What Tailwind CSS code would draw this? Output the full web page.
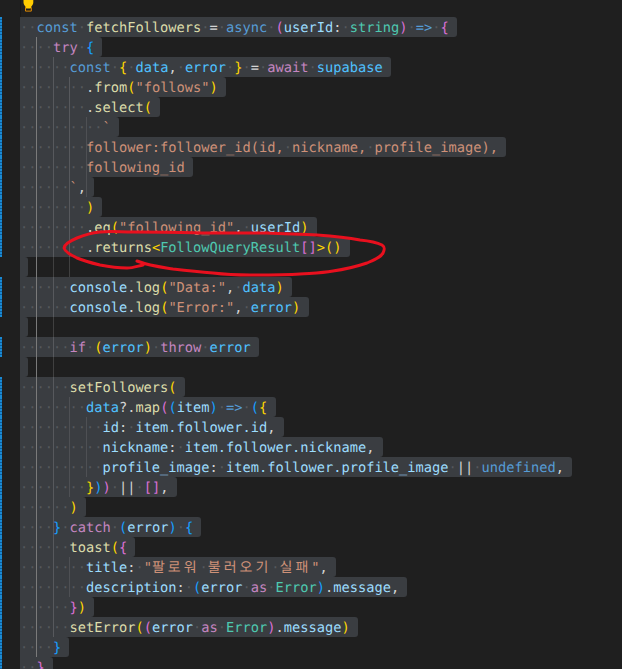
<!doctype html>
<html lang="ko">
<head>
<meta charset="utf-8">
<script src="https://cdn.jsdelivr.net/npm/@tailwindcss/browser@4"></script>
<title>fetchFollowers</title>
</head>
<body class="bg-[#1f1f1f]">
<main class="relative w-[622px] h-[669px] overflow-hidden bg-[#1f1f1f] font-['DejaVu_Sans_Mono','Noto_Sans_CJK_KR',monospace] text-[13.7px] leading-[22px] text-[#d4d4d4] whitespace-nowrap [text-rendering:geometricPrecision]">
  <div class="h-[17px] flex"><div class="w-[21px] border-r border-[#181818]"></div></div>

  <div class="flex flex-col">
    <!-- 0 --><div class="flex h-5"><div class="w-5 shrink-0 relative"><div class="w-0.5 h-5 bg-[repeating-linear-gradient(180deg,#1a8ad4_0,#1a8ad4_2px,#0d5f9c_2px,#0d5f9c_3px)]"></div></div><div class="bg-[#3a3d41] rounded-r-[3px] pr-[8.25px]"><span class="text-[#55585c]">··</span><span class="text-[#569cd6]">const</span><span class="text-[#55585c]">·</span><span class="text-[#dcdcaa]">fetchFollowers</span><span class="text-[#55585c]">·</span>=<span class="text-[#55585c]">·</span><span class="text-[#569cd6]">async</span><span class="text-[#55585c]">·</span><span class="text-[#da70d6]">(</span><span class="text-[#9cdcfe]">userId</span>:<span class="text-[#55585c]">·</span><span class="text-[#4ec9b0]">string</span><span class="text-[#da70d6]">)</span><span class="text-[#55585c]">·</span><span class="text-[#569cd6]">=&gt;</span><span class="text-[#55585c]">·</span><span class="text-[#da70d6]">{</span></div></div>
    <!-- 1 --><div class="flex h-5"><div class="w-5 shrink-0 relative"><div class="w-0.5 h-5 bg-[repeating-linear-gradient(180deg,#1a8ad4_0,#1a8ad4_2px,#0d5f9c_2px,#0d5f9c_3px)]"></div></div><div class="bg-[#3a3d41] rounded-r-[3px] pr-[8.25px]"><span class="text-[#55585c]">····</span><span class="text-[#c586c0]">try</span><span class="text-[#55585c]">·</span><span class="text-[#179fff]">{</span></div></div>
    <!-- 2 --><div class="flex h-5"><div class="w-5 shrink-0 relative"><div class="w-0.5 h-5 bg-[repeating-linear-gradient(180deg,#1a8ad4_0,#1a8ad4_2px,#0d5f9c_2px,#0d5f9c_3px)]"></div></div><div class="bg-[#3a3d41] rounded-r-[3px] pr-[8.25px]"><span class="text-[#55585c]">······</span><span class="text-[#569cd6]">const</span><span class="text-[#55585c]">·</span><span class="text-[#ffd700]">{</span><span class="text-[#55585c]">·</span><span class="text-[#4fc1ff]">data</span>,<span class="text-[#55585c]">·</span><span class="text-[#4fc1ff]">error</span><span class="text-[#55585c]">·</span><span class="text-[#ffd700]">}</span><span class="text-[#55585c]">·</span>=<span class="text-[#55585c]">·</span><span class="text-[#c586c0]">await</span><span class="text-[#55585c]">·</span><span class="text-[#4fc1ff]">supabase</span></div></div>
    <!-- 3 --><div class="flex h-5"><div class="w-5 shrink-0 relative"><div class="w-0.5 h-5 bg-[repeating-linear-gradient(180deg,#1a8ad4_0,#1a8ad4_2px,#0d5f9c_2px,#0d5f9c_3px)]"></div></div><div class="bg-[#3a3d41] rounded-r-[3px] pr-[8.25px]"><span class="text-[#55585c]">········</span>.<span class="text-[#dcdcaa]">from</span><span class="text-[#ffd700]">(</span><span class="text-[#ce9178]">"follows"</span><span class="text-[#ffd700]">)</span></div></div>
    <!-- 4 --><div class="flex h-5"><div class="w-5 shrink-0 relative"><div class="w-0.5 h-5 bg-[repeating-linear-gradient(180deg,#1a8ad4_0,#1a8ad4_2px,#0d5f9c_2px,#0d5f9c_3px)]"></div></div><div class="bg-[#3a3d41] rounded-r-[3px] pr-[8.25px]"><span class="text-[#55585c]">········</span>.<span class="text-[#dcdcaa]">select</span><span class="text-[#ffd700]">(</span></div></div>
    <!-- 5 --><div class="flex h-5"><div class="w-5 shrink-0 relative"><div class="w-0.5 h-5 bg-[repeating-linear-gradient(180deg,#1a8ad4_0,#1a8ad4_2px,#0d5f9c_2px,#0d5f9c_3px)]"></div></div><div class="bg-[#3a3d41] rounded-r-[3px] pr-[8.25px]"><span class="text-[#55585c]">··········</span><span class="text-[#ce9178]">`</span></div></div>
    <!-- 6 --><div class="flex h-5"><div class="w-5 shrink-0 relative"><div class="w-0.5 h-5 bg-[repeating-linear-gradient(180deg,#1a8ad4_0,#1a8ad4_2px,#0d5f9c_2px,#0d5f9c_3px)]"></div></div><div class="bg-[#3a3d41] rounded-r-[3px] pr-[8.25px]"><span class="text-[#55585c]">········</span><span class="text-[#ce9178]">follower:follower_id(id,<span class="text-[#55585c]">·</span>nickname,<span class="text-[#55585c]">·</span>profile_image),</span></div></div>
    <!-- 7 --><div class="flex h-5"><div class="w-5 shrink-0 relative"><div class="w-0.5 h-5 bg-[repeating-linear-gradient(180deg,#1a8ad4_0,#1a8ad4_2px,#0d5f9c_2px,#0d5f9c_3px)]"></div></div><div class="bg-[#3a3d41] rounded-r-[3px] pr-[8.25px]"><span class="text-[#55585c]">········</span><span class="text-[#ce9178]">following_id</span></div></div>
    <!-- 8 --><div class="flex h-5"><div class="w-5 shrink-0 relative"><div class="w-0.5 h-5 bg-[repeating-linear-gradient(180deg,#1a8ad4_0,#1a8ad4_2px,#0d5f9c_2px,#0d5f9c_3px)]"></div></div><div class="bg-[#3a3d41] rounded-r-[3px] pr-[8.25px]"><span class="text-[#55585c]">······</span><span class="text-[#ce9178]">`</span>,</div></div>
    <!-- 9 --><div class="flex h-5"><div class="w-5 shrink-0 relative"><div class="w-0.5 h-5 bg-[repeating-linear-gradient(180deg,#1a8ad4_0,#1a8ad4_2px,#0d5f9c_2px,#0d5f9c_3px)]"></div></div><div class="bg-[#3a3d41] rounded-r-[3px] pr-[8.25px]"><span class="text-[#55585c]">········</span><span class="text-[#ffd700]">)</span></div></div>
    <!-- 10 --><div class="flex h-5"><div class="w-5 shrink-0 relative"><div class="w-0.5 h-5 bg-[repeating-linear-gradient(180deg,#1a8ad4_0,#1a8ad4_2px,#0d5f9c_2px,#0d5f9c_3px)]"></div></div><div class="bg-[#3a3d41] rounded-r-[3px] pr-[8.25px]"><span class="text-[#55585c]">········</span>.<span class="text-[#dcdcaa]">eq</span><span class="text-[#ffd700]">(</span><span class="text-[#ce9178]">"following_id"</span>,<span class="text-[#55585c]">·</span><span class="text-[#9cdcfe]">userId</span><span class="text-[#ffd700]">)</span></div></div>
    <!-- 11 --><div class="flex h-5"><div class="w-5 shrink-0 relative"><div class="w-0.5 h-5 bg-[repeating-linear-gradient(180deg,#1a8ad4_0,#1a8ad4_2px,#0d5f9c_2px,#0d5f9c_3px)]"></div></div><div class="bg-[#3a3d41] rounded-r-[3px] pr-[8.25px]"><span class="text-[#55585c]">········</span>.<span class="text-[#dcdcaa]">returns</span><span class="text-[#ffd700]">&lt;</span><span class="text-[#4ec9b0]">FollowQueryResult</span><span class="text-[#da70d6]">[]</span><span class="text-[#ffd700]">&gt;()</span></div></div>
    <!-- 12 --><div class="flex h-5"><div class="w-5 shrink-0"></div><div class="bg-[#3a3d41] rounded-r-[3px] w-[8.25px]"></div></div>
    <!-- 13 --><div class="flex h-5"><div class="w-5 shrink-0 relative"><div class="w-0.5 h-5 bg-[repeating-linear-gradient(180deg,#1a8ad4_0,#1a8ad4_2px,#0d5f9c_2px,#0d5f9c_3px)]"></div></div><div class="bg-[#3a3d41] rounded-r-[3px] pr-[8.25px]"><span class="text-[#55585c]">······</span><span class="text-[#9cdcfe]">console</span>.<span class="text-[#dcdcaa]">log</span><span class="text-[#ffd700]">(</span><span class="text-[#ce9178]">"Data:"</span>,<span class="text-[#55585c]">·</span><span class="text-[#4fc1ff]">data</span><span class="text-[#ffd700]">)</span></div></div>
    <!-- 14 --><div class="flex h-5"><div class="w-5 shrink-0 relative"><div class="w-0.5 h-5 bg-[repeating-linear-gradient(180deg,#1a8ad4_0,#1a8ad4_2px,#0d5f9c_2px,#0d5f9c_3px)]"></div></div><div class="bg-[#3a3d41] rounded-r-[3px] pr-[8.25px]"><span class="text-[#55585c]">······</span><span class="text-[#9cdcfe]">console</span>.<span class="text-[#dcdcaa]">log</span><span class="text-[#ffd700]">(</span><span class="text-[#ce9178]">"Error:"</span>,<span class="text-[#55585c]">·</span><span class="text-[#4fc1ff]">error</span><span class="text-[#ffd700]">)</span></div></div>
    <!-- 15 --><div class="flex h-5"><div class="w-5 shrink-0"></div><div class="bg-[#3a3d41] rounded-r-[3px] w-[8.25px]"></div></div>
    <!-- 16 --><div class="flex h-5"><div class="w-5 shrink-0 relative"><div class="w-0.5 h-5 bg-[repeating-linear-gradient(180deg,#1a8ad4_0,#1a8ad4_2px,#0d5f9c_2px,#0d5f9c_3px)]"></div></div><div class="bg-[#3a3d41] rounded-r-[3px] pr-[8.25px]"><span class="text-[#55585c]">······</span><span class="text-[#c586c0]">if</span><span class="text-[#55585c]">·</span><span class="text-[#ffd700]">(</span><span class="text-[#4fc1ff]">error</span><span class="text-[#ffd700]">)</span><span class="text-[#55585c]">·</span><span class="text-[#c586c0]">throw</span><span class="text-[#55585c]">·</span><span class="text-[#4fc1ff]">error</span></div></div>
    <!-- 17 --><div class="flex h-5"><div class="w-5 shrink-0"></div><div class="bg-[#3a3d41] rounded-r-[3px] w-[8.25px]"></div></div>
    <!-- 18 --><div class="flex h-5"><div class="w-5 shrink-0 relative"><div class="w-0.5 h-5 bg-[repeating-linear-gradient(180deg,#1a8ad4_0,#1a8ad4_2px,#0d5f9c_2px,#0d5f9c_3px)]"></div></div><div class="bg-[#3a3d41] rounded-r-[3px] pr-[8.25px]"><span class="text-[#55585c]">······</span><span class="text-[#dcdcaa]">setFollowers</span><span class="text-[#ffd700]">(</span></div></div>
    <!-- 19 --><div class="flex h-5"><div class="w-5 shrink-0 relative"><div class="w-0.5 h-5 bg-[repeating-linear-gradient(180deg,#1a8ad4_0,#1a8ad4_2px,#0d5f9c_2px,#0d5f9c_3px)]"></div></div><div class="bg-[#3a3d41] rounded-r-[3px] pr-[8.25px]"><span class="text-[#55585c]">········</span><span class="text-[#4fc1ff]">data</span>?.<span class="text-[#dcdcaa]">map</span><span class="text-[#da70d6]">(</span><span class="text-[#179fff]">(</span><span class="text-[#9cdcfe]">item</span><span class="text-[#179fff]">)</span><span class="text-[#55585c]">·</span><span class="text-[#569cd6]">=&gt;</span><span class="text-[#55585c]">·</span><span class="text-[#179fff]">(</span><span class="text-[#ffd700]">{</span></div></div>
    <!-- 20 --><div class="flex h-5"><div class="w-5 shrink-0 relative"><div class="w-0.5 h-5 bg-[repeating-linear-gradient(180deg,#1a8ad4_0,#1a8ad4_2px,#0d5f9c_2px,#0d5f9c_3px)]"></div></div><div class="bg-[#3a3d41] rounded-r-[3px] pr-[8.25px]"><span class="text-[#55585c]">··········</span><span class="text-[#9cdcfe]">id</span>:<span class="text-[#55585c]">·</span><span class="text-[#9cdcfe]">item.follower.id</span>,</div></div>
    <!-- 21 --><div class="flex h-5"><div class="w-5 shrink-0 relative"><div class="w-0.5 h-5 bg-[repeating-linear-gradient(180deg,#1a8ad4_0,#1a8ad4_2px,#0d5f9c_2px,#0d5f9c_3px)]"></div></div><div class="bg-[#3a3d41] rounded-r-[3px] pr-[8.25px]"><span class="text-[#55585c]">··········</span><span class="text-[#9cdcfe]">nickname</span>:<span class="text-[#55585c]">·</span><span class="text-[#9cdcfe]">item.follower.nickname</span>,</div></div>
    <!-- 22 --><div class="flex h-5"><div class="w-5 shrink-0 relative"><div class="w-0.5 h-5 bg-[repeating-linear-gradient(180deg,#1a8ad4_0,#1a8ad4_2px,#0d5f9c_2px,#0d5f9c_3px)]"></div></div><div class="bg-[#3a3d41] rounded-r-[3px] pr-[8.25px]"><span class="text-[#55585c]">··········</span><span class="text-[#9cdcfe]">profile_image</span>:<span class="text-[#55585c]">·</span><span class="text-[#9cdcfe]">item.follower.profile_image</span><span class="text-[#55585c]">·</span>||<span class="text-[#55585c]">·</span><span class="text-[#569cd6]">undefined</span>,</div></div>
    <!-- 23 --><div class="flex h-5"><div class="w-5 shrink-0 relative"><div class="w-0.5 h-5 bg-[repeating-linear-gradient(180deg,#1a8ad4_0,#1a8ad4_2px,#0d5f9c_2px,#0d5f9c_3px)]"></div></div><div class="bg-[#3a3d41] rounded-r-[3px] pr-[8.25px]"><span class="text-[#55585c]">········</span><span class="text-[#ffd700]">}</span><span class="text-[#179fff]">)</span><span class="text-[#da70d6]">)</span><span class="text-[#55585c]">·</span>||<span class="text-[#55585c]">·</span><span class="text-[#da70d6]">[]</span>,</div></div>
    <!-- 24 --><div class="flex h-5"><div class="w-5 shrink-0 relative"><div class="w-0.5 h-5 bg-[repeating-linear-gradient(180deg,#1a8ad4_0,#1a8ad4_2px,#0d5f9c_2px,#0d5f9c_3px)]"></div></div><div class="bg-[#3a3d41] rounded-r-[3px] pr-[8.25px]"><span class="text-[#55585c]">······</span><span class="text-[#ffd700]">)</span></div></div>
    <!-- 25 --><div class="flex h-5"><div class="w-5 shrink-0 relative"><div class="w-0.5 h-5 bg-[repeating-linear-gradient(180deg,#1a8ad4_0,#1a8ad4_2px,#0d5f9c_2px,#0d5f9c_3px)]"></div></div><div class="bg-[#3a3d41] rounded-r-[3px] pr-[8.25px]"><span class="text-[#55585c]">····</span><span class="text-[#179fff]">}</span><span class="text-[#55585c]">·</span><span class="text-[#c586c0]">catch</span><span class="text-[#55585c]">·</span><span class="text-[#179fff]">(</span><span class="text-[#9cdcfe]">error</span><span class="text-[#179fff]">)</span><span class="text-[#55585c]">·</span><span class="text-[#179fff]">{</span></div></div>
    <!-- 26 --><div class="flex h-5"><div class="w-5 shrink-0 relative"><div class="w-0.5 h-5 bg-[repeating-linear-gradient(180deg,#1a8ad4_0,#1a8ad4_2px,#0d5f9c_2px,#0d5f9c_3px)]"></div></div><div class="bg-[#3a3d41] rounded-r-[3px] pr-[8.25px]"><span class="text-[#55585c]">······</span><span class="text-[#dcdcaa]">toast</span><span class="text-[#ffd700]">(</span><span class="text-[#da70d6]">{</span></div></div>
    <!-- 27 --><div class="flex h-5"><div class="w-5 shrink-0 relative"><div class="w-0.5 h-5 bg-[repeating-linear-gradient(180deg,#1a8ad4_0,#1a8ad4_2px,#0d5f9c_2px,#0d5f9c_3px)]"></div></div><div class="bg-[#3a3d41] rounded-r-[3px] pr-[8.25px]"><span class="text-[#55585c]">········</span><span class="text-[#9cdcfe]">title</span>:<span class="text-[#55585c]">·</span><span class="text-[#ce9178]">"<span class="text-[14px] tracking-[3px]">팔로워</span><span class="text-[#55585c]">·</span><span class="text-[14px] tracking-[3px]">불러오기</span><span class="text-[#55585c]">·</span><span class="text-[14px] tracking-[3px]">실패</span>"</span>,</div></div>
    <!-- 28 --><div class="flex h-5"><div class="w-5 shrink-0 relative"><div class="w-0.5 h-5 bg-[repeating-linear-gradient(180deg,#1a8ad4_0,#1a8ad4_2px,#0d5f9c_2px,#0d5f9c_3px)]"></div></div><div class="bg-[#3a3d41] rounded-r-[3px] pr-[8.25px]"><span class="text-[#55585c]">········</span><span class="text-[#9cdcfe]">description</span>:<span class="text-[#55585c]">·</span><span class="text-[#179fff]">(</span><span class="text-[#9cdcfe]">error</span><span class="text-[#55585c]">·</span><span class="text-[#c586c0]">as</span><span class="text-[#55585c]">·</span><span class="text-[#4ec9b0]">Error</span><span class="text-[#179fff]">)</span>.<span class="text-[#9cdcfe]">message</span>,</div></div>
    <!-- 29 --><div class="flex h-5"><div class="w-5 shrink-0 relative"><div class="w-0.5 h-5 bg-[repeating-linear-gradient(180deg,#1a8ad4_0,#1a8ad4_2px,#0d5f9c_2px,#0d5f9c_3px)]"></div></div><div class="bg-[#3a3d41] rounded-r-[3px] pr-[8.25px]"><span class="text-[#55585c]">······</span><span class="text-[#da70d6]">}</span><span class="text-[#ffd700]">)</span></div></div>
    <!-- 30 --><div class="flex h-5"><div class="w-5 shrink-0 relative"><div class="w-0.5 h-5 bg-[repeating-linear-gradient(180deg,#1a8ad4_0,#1a8ad4_2px,#0d5f9c_2px,#0d5f9c_3px)]"></div></div><div class="bg-[#3a3d41] rounded-r-[3px] pr-[8.25px]"><span class="text-[#55585c]">······</span><span class="text-[#dcdcaa]">setError</span><span class="text-[#ffd700]">(</span><span class="text-[#da70d6]">(</span><span class="text-[#9cdcfe]">error</span><span class="text-[#55585c]">·</span><span class="text-[#c586c0]">as</span><span class="text-[#55585c]">·</span><span class="text-[#4ec9b0]">Error</span><span class="text-[#da70d6]">)</span>.<span class="text-[#9cdcfe]">message</span><span class="text-[#ffd700]">)</span></div></div>
    <!-- 31 --><div class="flex h-5"><div class="w-5 shrink-0 relative"><div class="w-0.5 h-5 bg-[repeating-linear-gradient(180deg,#1a8ad4_0,#1a8ad4_2px,#0d5f9c_2px,#0d5f9c_3px)]"></div></div><div class="bg-[#3a3d41] rounded-r-[3px] pr-[8.25px]"><span class="text-[#55585c]">····</span><span class="text-[#179fff]">}</span></div></div>
    <!-- 32 --><div class="flex h-5"><div class="w-5 shrink-0 relative"><div class="w-0.5 h-5 bg-[repeating-linear-gradient(180deg,#1a8ad4_0,#1a8ad4_2px,#0d5f9c_2px,#0d5f9c_3px)]"></div></div><div class="bg-[#3a3d41] rounded-r-[3px] pr-[8.25px]"><span class="text-[#55585c]">··</span><span class="text-[#da70d6]">}</span></div></div>
  </div>

  <!-- indent guides -->
  <div class="absolute left-[36px] top-[37px] w-px h-[620px] bg-[#7a7a7a]"></div>
  <div class="absolute left-[53px] top-[57px] w-px h-[580px] bg-white/15"></div>
  <div class="absolute left-[69px] top-[77px] w-px h-[200px] bg-white/15"></div>
  <div class="absolute left-[69px] top-[397px] w-px h-[100px] bg-white/10"></div>
  <div class="absolute left-[69px] top-[557px] w-px h-[40px] bg-white/10"></div>
  <div class="absolute left-[86px] top-[117px] w-px h-[80px] bg-white/10"></div>
  <div class="absolute left-[86px] top-[417px] w-px h-[60px] bg-white/10"></div>

  <!-- lightbulb -->
  <svg class="absolute left-[22px] top-0" width="14" height="12" viewBox="0 0 14 12" aria-hidden="true">
    <path d="M3.5 7.5h5.8v3.6H3.5z" fill="#1f1f1f" stroke="#e08a00" stroke-width="1"/>
    <path d="M1.5 0v2.6c0 2 1.4 3 2.2 4.4L4.2 8.4h4.4l.5-1.4c.8-1.4 2.2-2.4 2.2-4.4V0z" fill="#ffcc00"/>
  </svg>

  <!-- red annotation -->
  <svg class="absolute inset-0" width="622" height="669" viewBox="0 0 622 669" fill="none" aria-hidden="true">
    <path d="M137 261C150 266 160 267 173 269C190 271 200 272 213 273C230 275 240 275 250 275C270 275 285 275 300 274C315 273 322 273 333 271C348 269 358 266 367 263C376 259 381 257 383 253C385 249 385 247 382 245C376 242 370 241 360 240C345 237 332 236 317 235C300 234 285 234 267 233C245 233 222 233 200 233C178 232 155 232 133 232C120 232 110 231 100 232C90 233 84 235 77 238C70 241 64 244 64 248C65 252 71 255 77 258C84 261 92 263 100 265C110 267 118 268 127 268C133 268 138 266 143 265" stroke="#e8101e" stroke-width="3" stroke-linecap="round" stroke-linejoin="round"/>
  </svg>
</main>
</body>
</html>
